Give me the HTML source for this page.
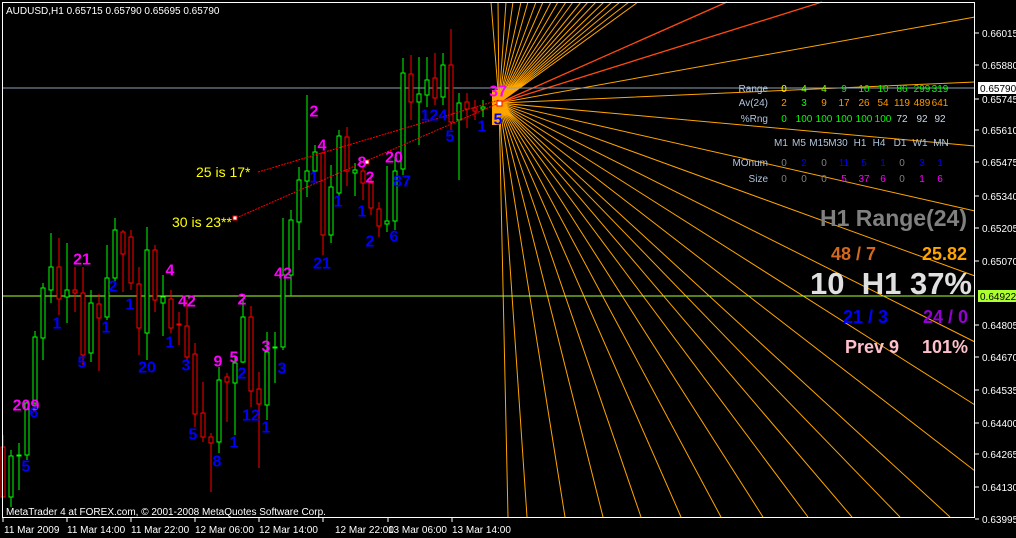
<!DOCTYPE html>
<html><head><meta charset="utf-8"><style>
html,body{margin:0;padding:0;background:#000;}
svg{display:block;}
.ax{font-family:"Liberation Sans",sans-serif;font-size:10px;fill:#fff;}
.t{font-family:"Liberation Sans",sans-serif;font-size:10px;}
.n{font-family:"Liberation Sans",sans-serif;font-weight:bold;font-size:16px;text-anchor:middle;dominant-baseline:central;}
.b{font-family:"Liberation Sans",sans-serif;font-weight:bold;}
.g line,.g rect{stroke:#00ff00;}
.r line,.r rect{stroke:#ff0000;}
rect{fill:#000;}
</style></head><body>
<svg width="1016" height="538" viewBox="0 0 1016 538" xmlns="http://www.w3.org/2000/svg" shape-rendering="crispEdges">
<rect x="0" y="0" width="1016" height="538" fill="#000"/>
<g stroke="#ffa500" stroke-width="1" shape-rendering="auto">
<path d="M499 103L491 2M499 103L498 2M499 103L506 2M499 103L513 2M499 103L521 2M499 103L528 2M499 103L536 2M499 103L543 2M499 103L551 2M499 103L558 2M499 103L566 2M499 103L573 2M499 103L581 2M499 103L588 2M499 103L596 2M499 103L604 2M499 103L612 2M499 103L620 2M499 103L629 2M499 103L638 2M499 103L975 17M499 103L975 82M499 103L975 146M499 103L975 211M499 103L975 276M499 103L975 342M499 103L975 405M499 103L975 471M499 103L508 517M499 103L527 517M499 103L565 517M499 103L603 517M499 103L641 517M499 103L681 517M499 103L721 517M499 103L763 517M499 103L808 517M499 103L852 517M499 103L900 517M499 103L950 517"/>
</g>
<g stroke="#ff4a10" stroke-width="1.3" shape-rendering="auto"><path d="M499 103L727 2M499 103L822 2"/></g>
<line x1="3" y1="88" x2="975" y2="88" stroke="#8ca0b4"/>
<line x1="3" y1="296" x2="975" y2="296" stroke="#adff2f"/>
<g stroke-width="1">
<g class="r"><line x1="3" y1="435" x2="3" y2="497"/><rect x="1" y="447" width="4" height="50"/></g>
<g class="g"><line x1="11" y1="450" x2="11" y2="507"/><rect x="9" y="456" width="4" height="41"/></g>
<g class="g"><line x1="19" y1="443" x2="19" y2="490"/><rect x="17" y="455" width="4" height="1"/></g>
<g class="g"><line x1="27" y1="400" x2="27" y2="460"/><rect x="25" y="403" width="4" height="52"/></g>
<g class="g"><line x1="35" y1="331" x2="35" y2="410"/><rect x="33" y="337" width="4" height="66"/></g>
<g class="g"><line x1="43" y1="283" x2="43" y2="360"/><rect x="41" y="288" width="4" height="50"/></g>
<g class="g"><line x1="51" y1="233" x2="51" y2="303"/><rect x="49" y="267" width="4" height="23"/></g>
<g class="r"><line x1="59" y1="238" x2="59" y2="315"/><rect x="57" y="267" width="4" height="32"/></g>
<g class="g"><line x1="67" y1="243" x2="67" y2="323"/><rect x="65" y="290" width="4" height="7"/></g>
<g class="r"><line x1="75" y1="267" x2="75" y2="312"/><rect x="73" y="290" width="4" height="3"/></g>
<g class="r"><line x1="83" y1="267" x2="83" y2="365"/><rect x="81" y="293" width="4" height="62"/></g>
<g class="g"><line x1="91" y1="290" x2="91" y2="362"/><rect x="89" y="303" width="4" height="50"/></g>
<g class="r"><line x1="99" y1="294" x2="99" y2="371"/><rect x="97" y="304" width="4" height="14"/></g>
<g class="g"><line x1="107" y1="245" x2="107" y2="320"/><rect x="105" y="278" width="4" height="39"/></g>
<g class="g"><line x1="115" y1="218" x2="115" y2="285"/><rect x="113" y="230" width="4" height="48"/></g>
<g class="r"><line x1="123" y1="230" x2="123" y2="292"/><rect x="121" y="232" width="4" height="22"/></g>
<g class="r"><line x1="131" y1="230" x2="131" y2="290"/><rect x="129" y="237" width="4" height="46"/></g>
<g class="r"><line x1="139" y1="267" x2="139" y2="355"/><rect x="137" y="284" width="4" height="44"/></g>
<g class="g"><line x1="147" y1="227" x2="147" y2="360"/><rect x="145" y="250" width="4" height="83"/></g>
<g class="r"><line x1="155" y1="245" x2="155" y2="312"/><rect x="153" y="250" width="4" height="50"/></g>
<g class="g"><line x1="163" y1="275" x2="163" y2="336"/><rect x="161" y="297" width="4" height="6"/></g>
<g class="r"><line x1="171" y1="290" x2="171" y2="333"/><rect x="169" y="299" width="4" height="29"/></g>
<g class="r"><line x1="179" y1="312" x2="179" y2="345"/><rect x="177" y="324" width="4" height="1"/></g>
<g class="r"><line x1="187" y1="300" x2="187" y2="360"/><rect x="185" y="326" width="4" height="31"/></g>
<g class="r"><line x1="195" y1="343" x2="195" y2="427"/><rect x="193" y="354" width="4" height="60"/></g>
<g class="r"><line x1="203" y1="382" x2="203" y2="442"/><rect x="201" y="413" width="4" height="24"/></g>
<g class="r"><line x1="211" y1="433" x2="211" y2="492"/><rect x="209" y="437" width="4" height="6"/></g>
<g class="g"><line x1="219" y1="367" x2="219" y2="453"/><rect x="217" y="380" width="4" height="62"/></g>
<g class="r"><line x1="227" y1="373" x2="227" y2="422"/><rect x="225" y="377" width="4" height="5"/></g>
<g class="g"><line x1="235" y1="357" x2="235" y2="435"/><rect x="233" y="363" width="4" height="20"/></g>
<g class="g"><line x1="243" y1="300" x2="243" y2="363"/><rect x="241" y="317" width="4" height="45"/></g>
<g class="r"><line x1="251" y1="306" x2="251" y2="407"/><rect x="249" y="317" width="4" height="74"/></g>
<g class="r"><line x1="259" y1="372" x2="259" y2="468"/><rect x="257" y="389" width="4" height="15"/></g>
<g class="g"><line x1="267" y1="332" x2="267" y2="420"/><rect x="265" y="352" width="4" height="53"/></g>
<g class="g"><line x1="275" y1="332" x2="275" y2="383"/><rect x="273" y="347" width="4" height="1"/></g>
<g class="g"><line x1="283" y1="218" x2="283" y2="350"/><rect x="281" y="275" width="4" height="72"/></g>
<g class="g"><line x1="291" y1="210" x2="291" y2="296"/><rect x="289" y="220" width="4" height="55"/></g>
<g class="g"><line x1="299" y1="167" x2="299" y2="250"/><rect x="297" y="180" width="4" height="42"/></g>
<g class="g"><line x1="307" y1="95" x2="307" y2="197"/><rect x="305" y="171" width="4" height="10"/></g>
<g class="g"><line x1="315" y1="145" x2="315" y2="175"/><rect x="313" y="152" width="4" height="19"/></g>
<g class="r"><line x1="323" y1="152" x2="323" y2="255"/><rect x="321" y="153" width="4" height="82"/></g>
<g class="g"><line x1="331" y1="165" x2="331" y2="243"/><rect x="329" y="187" width="4" height="48"/></g>
<g class="g"><line x1="339" y1="130" x2="339" y2="200"/><rect x="337" y="136" width="4" height="57"/></g>
<g class="r"><line x1="347" y1="127" x2="347" y2="186"/><rect x="345" y="137" width="4" height="34"/></g>
<g class="g"><line x1="355" y1="163" x2="355" y2="196"/><rect x="353" y="170" width="4" height="3"/></g>
<g class="r"><line x1="363" y1="165" x2="363" y2="200"/><rect x="361" y="171" width="4" height="12"/></g>
<g class="r"><line x1="371" y1="175" x2="371" y2="215"/><rect x="369" y="183" width="4" height="25"/></g>
<g class="r"><line x1="379" y1="202" x2="379" y2="237"/><rect x="377" y="209" width="4" height="17"/></g>
<g class="g"><line x1="387" y1="166" x2="387" y2="232"/><rect x="385" y="221" width="4" height="3"/></g>
<g class="g"><line x1="395" y1="157" x2="395" y2="230"/><rect x="393" y="171" width="4" height="50"/></g>
<g class="g"><line x1="403" y1="58" x2="403" y2="175"/><rect x="401" y="73" width="4" height="96"/></g>
<g class="r"><line x1="411" y1="55" x2="411" y2="120"/><rect x="409" y="74" width="4" height="28"/></g>
<g class="g"><line x1="419" y1="57" x2="419" y2="145"/><rect x="417" y="94" width="4" height="8"/></g>
<g class="g"><line x1="427" y1="57" x2="427" y2="107"/><rect x="425" y="80" width="4" height="15"/></g>
<g class="r"><line x1="435" y1="53" x2="435" y2="105"/><rect x="433" y="78" width="4" height="20"/></g>
<g class="g"><line x1="443" y1="53" x2="443" y2="105"/><rect x="441" y="65" width="4" height="32"/></g>
<g class="r"><line x1="451" y1="29" x2="451" y2="130"/><rect x="449" y="65" width="4" height="57"/></g>
<g class="g"><line x1="459" y1="93" x2="459" y2="180"/><rect x="457" y="103" width="4" height="17"/></g>
<g class="r"><line x1="467" y1="93" x2="467" y2="128"/><rect x="465" y="102" width="4" height="7"/></g>
<g class="r"><line x1="475" y1="100" x2="475" y2="120"/><rect x="473" y="108" width="4" height="3"/></g>
<g class="g"><line x1="483" y1="100" x2="483" y2="117"/><rect x="481" y="107" width="4" height="2"/></g>
<rect x="492" y="90" width="7" height="35" stroke="none" style="fill:#ffa500"/>
</g>
<g stroke="#ff0000" stroke-width="1" stroke-dasharray="2,1" shape-rendering="auto">
<line x1="258" y1="172" x2="499" y2="100"/>
<line x1="236" y1="218" x2="499" y2="103"/>
</g>
<rect x="233" y="216" width="4" height="4" style="fill:#fff" stroke="#f00"/>
<rect x="365" y="160" width="4" height="4" style="fill:#fff" stroke="#f00"/>
<rect x="497" y="101" width="5" height="5" style="fill:#fff" stroke="#f00"/>
<text x="196" y="177" font-family="Liberation Sans,sans-serif" font-size="14" fill="#ffff00">25 is 17*</text>
<text x="172" y="227" font-family="Liberation Sans,sans-serif" font-size="14" fill="#ffff00">30 is 23**</text>
<g class="n" fill="#ff00ff">
<text x="26" y="406">209</text><text x="82" y="260">21</text><text x="170" y="271">4</text><text x="187" y="302">42</text>
<text x="242" y="300">2</text><text x="218" y="362">9</text><text x="234" y="358">5</text><text x="266" y="347">3</text>
<text x="283" y="274">42</text><text x="314" y="112">2</text><text x="322" y="146">4</text><text x="362" y="163">8</text>
<text x="370" y="178">2</text><text x="394" y="158">20</text><text x="498" y="92">37</text>
</g>
<g class="n" fill="#0000ff">
<text x="34" y="413">6</text><text x="26" y="467">5</text><text x="57" y="324">1</text><text x="113" y="287">2</text>
<text x="130" y="305">1</text><text x="106" y="328">1</text><text x="82" y="363">5</text><text x="147" y="368">20</text>
<text x="170" y="343">1</text><text x="186" y="366">3</text><text x="193" y="435">5</text><text x="217" y="462">8</text>
<text x="234" y="443">1</text><text x="242" y="374">2</text><text x="251" y="416">12</text><text x="266" y="428">1</text>
<text x="282" y="369">3</text><text x="314" y="178">1</text><text x="338" y="202">1</text><text x="362" y="212">1</text>
<text x="370" y="242">2</text><text x="394" y="237">6</text><text x="402" y="182">87</text><text x="322" y="264">21</text>
<text x="434" y="116">124</text><text x="450" y="137">5</text><text x="482" y="127">1</text><text x="498" y="120">5</text>
</g>
<g class="t" text-anchor="end" fill="#b0c4de">
<text x="768" y="92">Range</text><text x="768" y="106">Av(24)</text><text x="768" y="122">%Rng</text>
<text x="768" y="166">MOnum</text><text x="768" y="182">Size</text>
</g>
<g class="t" text-anchor="middle">
<text x="784" y="92" fill="#ffff00">0</text><text x="804" y="92" fill="#7cfc00">4</text><text x="824" y="92" fill="#7cfc00">4</text><text x="844" y="92" fill="#32cd32">9</text><text x="864" y="92" fill="#00ff00">10</text><text x="883" y="92" fill="#00ff00">10</text><text x="902" y="92" fill="#00ff00">86</text><text x="922" y="92" fill="#00ff00">299</text><text x="940" y="92" fill="#00ff00">319</text>
<g fill="#ff9900"><text x="784" y="106">2</text><text x="804" y="106" fill="#00ff00">3</text><text x="824" y="106">9</text><text x="844" y="106">17</text><text x="864" y="106">26</text><text x="883" y="106">54</text><text x="902" y="106">119</text><text x="922" y="106">489</text><text x="940" y="106">641</text></g>
<g fill="#00ff00"><text x="784" y="122">0</text><text x="804" y="122">100</text><text x="824" y="122">100</text><text x="844" y="122">100</text><text x="864" y="122">100</text><text x="883" y="122">100</text><text x="902" y="122" fill="#c8d8e8">72</text><text x="922" y="122" fill="#c8d8e8">92</text><text x="940" y="122" fill="#c8d8e8">92</text></g>
<g fill="#b0c4de"><text x="781" y="146">M1</text><text x="799" y="146">M5</text><text x="819" y="146">M15</text><text x="838" y="146">M30</text><text x="860" y="146">H1</text><text x="879" y="146">H4</text><text x="900" y="146">D1</text><text x="920" y="146">W1</text><text x="941" y="146">MN</text></g>
<text x="784" y="166" fill="#808080">0</text><text x="804" y="166" fill="#0000ff">2</text><text x="824" y="166" fill="#808080">0</text><text x="844" y="166" fill="#0000ff">11</text><text x="864" y="166" fill="#0000ff">5</text><text x="883" y="166" fill="#0000ff">1</text><text x="902" y="166" fill="#808080">0</text><text x="922" y="166" fill="#0000ff">3</text><text x="940" y="166" fill="#0000ff">1</text>
<text x="784" y="182" fill="#808080">0</text><text x="804" y="182" fill="#808080">0</text><text x="824" y="182" fill="#808080">0</text><text x="844" y="182" fill="#ff00ff">5</text><text x="864" y="182" fill="#ff00ff">37</text><text x="883" y="182" fill="#ff00ff">6</text><text x="902" y="182" fill="#808080">0</text><text x="922" y="182" fill="#ff00ff">1</text><text x="940" y="182" fill="#ff00ff">6</text>
</g>
<g class="b" text-anchor="end">
<text x="967" y="226" font-size="23" fill="#808080">H1 Range(24)</text>
<text x="876" y="260" font-size="18" fill="#d2691e">48 / 7</text>
<text x="967" y="260" font-size="18" fill="#ffa500">25.82</text>
<text x="972" y="294" font-size="31" fill="#e0e0e0" xml:space="preserve">10  H1 37%</text>
<text x="888" y="323" font-size="18" fill="#0000ff">21 / 3</text>
<text x="968" y="323" font-size="18" fill="#9400d3">24 / 0</text>
<text x="899" y="353" font-size="18" fill="#ffc0cb">Prev 9</text>
<text x="968" y="353" font-size="18" fill="#ffc0cb">101%</text>
</g>
<rect x="2.5" y="2.5" width="972" height="515" style="fill:none" stroke="#fff"/>
<text class="t" x="6" y="14" fill="#fff">AUDUSD,H1  0.65715 0.65790 0.65695 0.65790</text>
<text class="t" x="6" y="515" fill="#fff">MetaTrader 4 at FOREX.com, © 2001-2008 MetaQuotes Software Corp.</text>
<g stroke="#fff">
<path d="M975 33h4M975 65h4M975 99h4M975 130h4M975 162h4M975 196h4M975 228h4M975 261h4M975 325h4M975 357h4M975 390h4M975 423h4M975 454h4M975 487h4M975 519h4"/>
<path d="M3 518v4M67 518v4M131 518v4M195 518v4M259 518v4M323 518v4M388 518v4M452 518v4"/>
</g>
<g class="ax">
<text x="982" y="37">0.66015</text><text x="982" y="69">0.65880</text><text x="982" y="103">0.65745</text><text x="982" y="134">0.65610</text>
<text x="982" y="166">0.65475</text><text x="982" y="200">0.65340</text><text x="982" y="232">0.65205</text><text x="982" y="265">0.65070</text>
<text x="982" y="329">0.64805</text><text x="982" y="361">0.64670</text><text x="982" y="394">0.64535</text><text x="982" y="427">0.64400</text>
<text x="982" y="458">0.64265</text><text x="982" y="491">0.64130</text><text x="982" y="523">0.63995</text>
</g>
<rect x="978" y="82" width="38" height="12" style="fill:#fff"/>
<text class="ax" x="980" y="92" style="fill:#000">0.65790</text>
<rect x="978" y="290" width="38" height="12" style="fill:#adff2f"/>
<text class="ax" x="980" y="300" style="fill:#000">0.64922</text>
<g class="ax">
<text x="4" y="533">11 Mar 2009</text><text x="67" y="533">11 Mar 14:00</text><text x="131" y="533">11 Mar 22:00</text><text x="195" y="533">12 Mar 06:00</text>
<text x="259" y="533">12 Mar 14:00</text><text x="335" y="533">12 Mar 22:00</text><text x="388" y="533">13 Mar 06:00</text><text x="452" y="533">13 Mar 14:00</text>
</g>
</svg>
</body></html>
